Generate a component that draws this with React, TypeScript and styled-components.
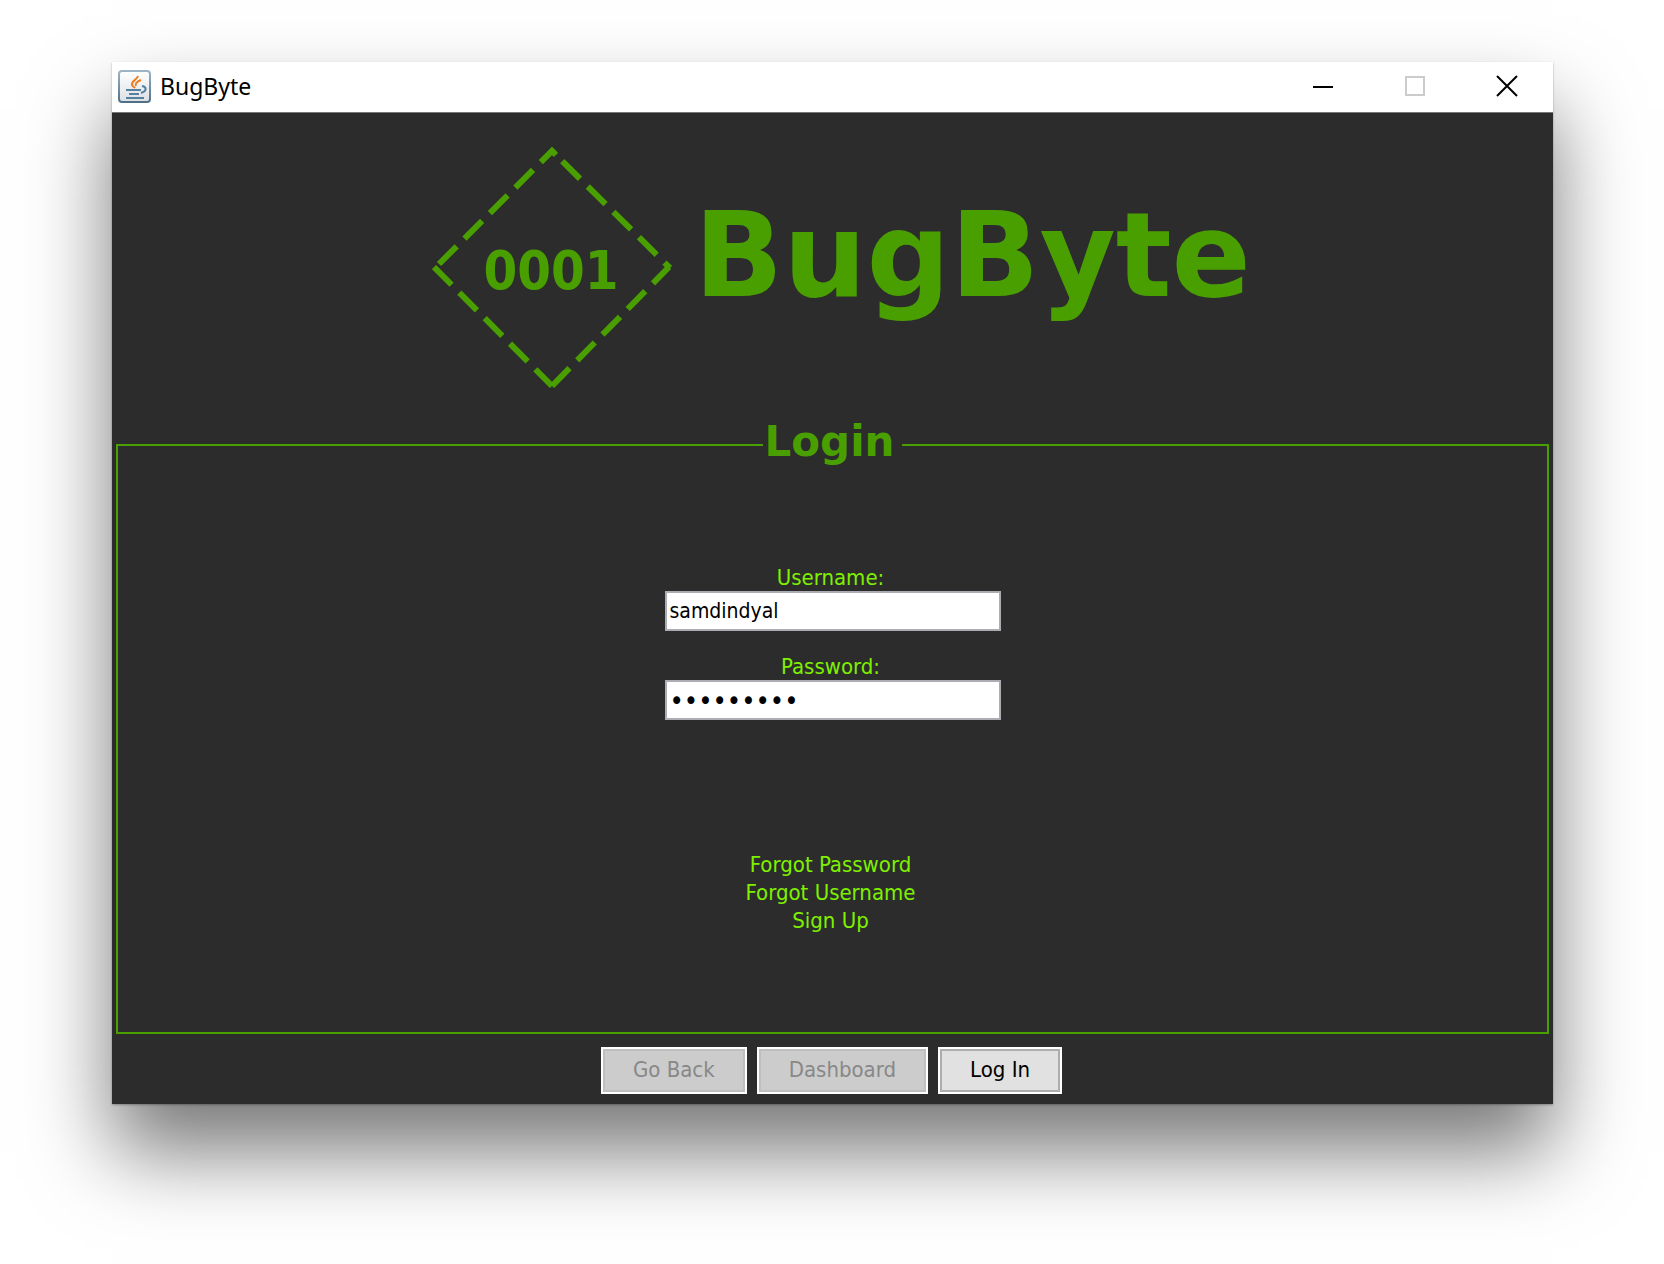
import React from "react";
import styled, { createGlobalStyle } from "styled-components";

const green = "#4a9f00";
const lime = "#7ff000";
const ui = `"DejaVu Sans Condensed", "Noto Sans", sans-serif`;
const display = `"DejaVu Sans", sans-serif`;

const GlobalStyle = createGlobalStyle`
  * { box-sizing: border-box; }
  body { margin: 0; background: #fff; font-family: ${ui}; }
`;

const Desktop = styled.div`
  min-height: 100vh;
  padding: 62px 111px 160px 112px;
  display: flex;
  overflow: hidden;
`;

const Window = styled.main`
  flex: 1;
  display: flex;
  flex-direction: column;
  background: #2c2c2c;
  box-shadow: 0 48px 78px rgba(0, 0, 0, 0.53), 0 1px 2px rgba(0, 0, 0, 0.3);
`;

const TitleBar = styled.header`
  height: 51px;
  display: flex;
  align-items: center;
  padding: 0 0 2px 6px;
  background: #fff;
  border-bottom: 1px solid #777;
`;

const Title = styled.h1`
  margin: 0 0 0 9px;
  flex: 1;
  font: 400 23px/32px "Noto Sans", sans-serif;
  color: #000;
`;

const Caption = styled.button`
  width: 92px;
  height: 48px;
  padding: 0;
  border: 0;
  background: none;
  display: grid;
  place-items: center;
  color: #000;
  &:disabled { color: #ccc; }
`;

const Banner = styled.section`
  height: 305px;
  display: flex;
  align-items: center;
  justify-content: center;
  gap: 22px;
  padding: 5px 0 0 18px;
  color: ${green};
`;

const Wordmark = styled.span`
  padding-bottom: 24px;
  font: 700 117px/130px ${display};
`;

const Code = styled.text`
  font: 700 54px "DejaVu Sans Condensed", sans-serif;
  fill: ${green};
`;

const Panel = styled.fieldset`
  flex: 1;
  margin: 0 4px;
  padding: 92px 0 0;
  border: 2px solid ${green};
  display: flex;
  flex-direction: column;
  align-items: center;
  min-width: 0;
`;

const Legend = styled.legend`
  margin: 0 auto;
  padding: 0 8px 6px 2px;
  font: 700 42px/48px ${display};
  color: ${green};
`;

const Form = styled.div`
  display: flex;
  flex-direction: column;
  gap: 22px;
`;

const Label = styled.label`
  display: flex;
  flex-direction: column;
  align-items: center;
  font: 22px/27px ${ui};
  color: ${lime};
`;

const LabelText = styled.span`
  padding-right: 4px;
`;

const Input = styled.input<{ $size: number }>`
  width: 336px;
  height: 40px;
  padding: 0 3px;
  border: 2px solid #abadb3;
  border-radius: 0;
  outline: 0;
  background: #fff;
  color: #000;
  font: ${(p) => p.$size}px/28px ${ui};
`;

const Links = styled.nav`
  margin-top: 131px;
  padding-right: 4px;
  display: flex;
  flex-direction: column;
  align-items: center;
`;

const Link = styled.a`
  font: 22px/28px ${ui};
  color: ${lime};
  text-decoration: none;
`;

const Actions = styled.footer`
  height: 70px;
  padding: 2px 2px 0 0;
  display: flex;
  align-items: center;
  justify-content: center;
  gap: 10px;
`;

const Action = styled.button`
  height: 47px;
  padding: 0 30px;
  border: 2px solid #fff;
  outline: 2px solid #adadad;
  outline-offset: -4px;
  background: #e1e1e1;
  color: #000;
  font: 22px/28px ${ui};
  &:disabled {
    background: #ccc;
    outline-color: #bfbfbf;
    color: #888;
  }
`;

function JavaIcon() {
  return (
    <svg width="33" height="33" viewBox="0 0 33 33" fill="none" aria-hidden="true">
      <defs>
        <linearGradient id="frame" x2="0" y2="1">
          <stop stopColor="#9db4c6" />
          <stop offset="1" stopColor="#4f6f87" />
        </linearGradient>
        <linearGradient id="face" x2="0" y2="1">
          <stop stopColor="#fff" />
          <stop offset="1" stopColor="#dcdfe3" />
        </linearGradient>
      </defs>
      <rect x="1" y="1" width="31" height="31" rx="3" fill="url(#face)" stroke="url(#frame)" strokeWidth="2" />
      <path d="M20 6c-1 4-7 5-6 9 0 1 2 2 3 3M23 10c-5 2-6 4-5 6" stroke="#ee7d22" strokeWidth="2" />
      <path d="M8 20h15M11 24h10M8 28h18M24 16c5 1 5 5-1 7" stroke="#54819f" strokeWidth="2" />
    </svg>
  );
}

function Diamond() {
  return (
    <svg width="240" height="242" viewBox="0 0 240 242" role="img" aria-label="0001">
      <g stroke={green} strokeWidth="6" fill="none" strokeDasharray="25 11">
        <path d="M2 120 L120 239" />
        <path d="M120 239 L237 120" />
        <path d="M121 5 L238 121" strokeDashoffset="-13" />
        <path d="M7 117 L122 2" />
        <path d="M118 2l6 6" strokeDasharray="none" />
      </g>
      <Code x="119" y="142" textAnchor="middle">0001</Code>
    </svg>
  );
}

export default function App() {
  return (
    <>
      <GlobalStyle />
      <Desktop>
        <Window>
          <TitleBar>
            <JavaIcon />
            <Title>BugByte</Title>
            <Caption aria-label="Minimize">
              <svg width="22" height="22"><path d="M1 12h20" stroke="currentColor" strokeWidth="2" /></svg>
            </Caption>
            <Caption aria-label="Maximize" disabled>
              <svg width="22" height="22"><path d="M2 2h18v18H2z" fill="none" stroke="currentColor" strokeWidth="2" /></svg>
            </Caption>
            <Caption aria-label="Close">
              <svg width="22" height="22"><path d="M1 1l20 20M21 1L1 21" stroke="currentColor" strokeWidth="2" /></svg>
            </Caption>
          </TitleBar>
          <Banner>
            <Diamond />
            <Wordmark>BugByte</Wordmark>
          </Banner>
          <Panel>
            <Legend>Login</Legend>
            <Form>
              <Label>
                <LabelText>Username:</LabelText>
                <Input $size={21} type="text" defaultValue="samdindyal" />
              </Label>
              <Label>
                <LabelText>Password:</LabelText>
                <Input $size={27} type="password" defaultValue="password1" />
              </Label>
            </Form>
            <Links>
              <Link href="#password">Forgot Password</Link>
              <Link href="#username">Forgot Username</Link>
              <Link href="#signup">Sign Up</Link>
            </Links>
          </Panel>
          <Actions>
            <Action disabled>Go Back</Action>
            <Action disabled>Dashboard</Action>
            <Action>Log In</Action>
          </Actions>
        </Window>
      </Desktop>
    </>
  );
}
